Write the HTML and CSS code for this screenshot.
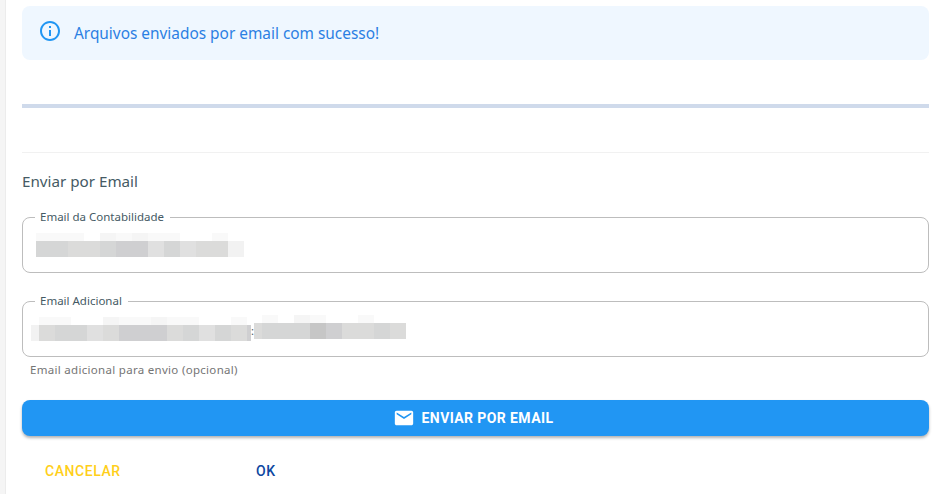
FILE: index.html
```html
<!DOCTYPE html>
<html lang="pt-BR">
<head>
  <meta charset="UTF-8">
  <meta name="viewport" content="width=device-width, initial-scale=1.0">
  <title>Enviar por Email</title>
  <link rel="stylesheet" href="styles.css">
</head>
<body>
  <main class="panel">
    <div class="alert">
      <svg class="alert-icon" viewBox="0 0 24 24"><path d="M11 7h2v2h-2zm0 4h2v6h-2zm1-9C6.48 2 2 6.48 2 12s4.48 10 10 10 10-4.48 10-10S17.52 2 12 2zm0 18c-4.41 0-8-3.59-8-8s3.59-8 8-8 8 3.59 8 8-3.59 8-8 8z"/></svg>
      <span>Arquivos enviados por email com sucesso!</span>
    </div>

    <div class="progress"></div>
    <hr class="divider">

    <h2 class="title">Enviar por Email</h2>

    <fieldset class="field first">
      <legend>Email da Contabilidade</legend>
      <div class="blur">
        <div class="blur-row">
          <i class="w16 s1"></i><i class="w16 s1"></i><i class="w16 s1"></i><i class="w16"></i><i class="w16 s2"></i><i class="w16 s1"></i><i class="w16 s2"></i><i class="w16 s1"></i><i class="w16 s1"></i><i class="w16"></i><i class="w16"></i><i class="w16 s1"></i>
        </div>
        <div class="blur-row">
          <i class="w16 s6"></i><i class="w16 s6"></i><i class="w16 s5"></i><i class="w16 s5"></i><i class="w16 s6"></i><i class="w16 s7"></i><i class="w16 s7"></i><i class="w16 s4"></i><i class="w16 s6"></i><i class="w16 s4"></i><i class="w16 s5"></i><i class="w16 s5"></i><i class="w16 s3"></i>
        </div>
      </div>
    </fieldset>

    <fieldset class="field second">
      <legend>Email Adicional</legend>
      <div class="blur-pair">
        <div class="blur">
          <div class="blur-row">
            <i class="w8"></i><i class="w16 s1"></i><i class="w16 s1"></i><i class="w16"></i><i class="w16"></i><i class="w16 s2"></i><i class="w16 s1"></i><i class="w16 s1"></i><i class="w16 s2"></i><i class="w16 s1"></i><i class="w16 s1"></i><i class="w16"></i><i class="w16"></i><i class="w16 s1"></i>
          </div>
          <div class="blur-row">
            <i class="w8 s3"></i><i class="w16 s5"></i><i class="w16 s6"></i><i class="w16 s6"></i><i class="w16 s4"></i><i class="w16 s5"></i><i class="w16 s7"></i><i class="w16 s7"></i><i class="w16 s7"></i><i class="w16 s5"></i><i class="w16 s6"></i><i class="w16 s4"></i><i class="w16 s6"></i><i class="w16 s5"></i><i class="w4 s7"></i>
          </div>
        </div>
        <span class="colon">:</span>
        <div class="blur raised">
          <div class="blur-row">
            <i class="w8"></i><i class="w16 s1"></i><i class="w16"></i><i class="w16 s2"></i><i class="w16 s1"></i><i class="w16"></i><i class="w16"></i><i class="w16 s1"></i>
          </div>
          <div class="blur-row">
            <i class="w8 s5"></i><i class="w16 s6"></i><i class="w16 s6"></i><i class="w16 s6"></i><i class="w16 s8"></i><i class="w16 s7"></i><i class="w16 s5"></i><i class="w16 s5"></i><i class="w16 s6"></i><i class="w16 s5"></i>
          </div>
        </div>
      </div>
    </fieldset>
    <p class="helper">Email adicional para envio (opcional)</p>

    <button class="send" type="button">
      <svg class="send-icon" viewBox="0 0 24 24"><path d="M20 4H4c-1.1 0-1.99.9-1.99 2L2 18c0 1.1.9 2 2 2h16c1.1 0 2-.9 2-2V6c0-1.1-.9-2-2-2zm0 4l-8 5-8-5V6l8 5 8-5v2z"/></svg>
      ENVIAR POR EMAIL
    </button>

    <div class="actions">
      <button class="action cancel" type="button">CANCELAR</button>
      <button class="action ok" type="button">OK</button>
    </div>
  </main>
</body>
</html>
```

FILE: styles.css
```css
* {
  box-sizing: border-box;
}

html,
body {
  height: 100%;
}

body {
  margin: 0;
  overflow: hidden;
  background-color: #fff;
  font-family: "Noto Sans", Arial, sans-serif;
  color: #455a64;
}

.panel {
  height: 494px;
  margin-left: 5px;
  padding: 6px 3px 0 16px;
  border-left: 1px solid #ececec;
  box-shadow: -5px 0 0 #f5f5f5;
}

.alert {
  display: flex;
  align-items: center;
  gap: 12px;
  height: 54px;
  padding: 0 16px;
  border-radius: 8px;
  background-color: #eff7ff;
  color: #2b7fe3;
  font-size: 15.4px;
}

.alert-icon {
  width: 24px;
  height: 24px;
  margin-top: -5px;
  fill: #2196f3;
}

.progress {
  height: 4px;
  margin-top: 44px;
  background-color: #cfdaeb;
}

.divider {
  height: 1px;
  margin: 44px 0 0;
  border: 0;
  background-color: #f1f1f1;
}

.title {
  margin: 18px 0 0;
  font-size: 15.2px;
  font-weight: 400;
  line-height: 20px;
}

.field {
  display: block;
  min-width: 0;
  height: 64px;
  margin: 0;
  padding: 0 13px;
  border: 1px solid #bdbdbd;
  border-radius: 8px;
}

.field.first {
  margin-top: 18px;
}

.field.second {
  margin-top: 20px;
}

.field legend {
  margin-left: -1px;
  padding: 0 6px 0 5px;
  font-size: 11.5px;
  line-height: 16px;
}

.blur-pair {
  display: flex;
  align-items: flex-start;
}

.field.first .blur {
  margin-top: 8px;
}

.field.second .blur-pair {
  margin: 8px 0 0 -5px;
}

.blur-row {
  display: flex;
  height: 8px;
}

.blur-row + .blur-row {
  height: 16px;
}

.blur-row i {
  display: block;
  flex: none;
}

.raised {
  margin-top: -2px;
}

.colon {
  width: 3px;
  margin-top: 4px;
  font-size: 11px;
  line-height: 20px;
}

.w16 { width: 16px; }
.w8 { width: 8px; }
.w4 { width: 4px; }

.s1 { background-color: #f9f9f9; }
.s2 { background-color: #f5f5f5; }
.s3 { background-color: #f2f2f2; }
.s4 { background-color: #e0e0e0; }
.s5 { background-color: #dbdbda; }
.s6 { background-color: #d5d6d6; }
.s7 { background-color: #cfcfd1; }
.s8 { background-color: #c6c6c6; }

.helper {
  margin: 5px 0 0 8px;
  font-size: 11.5px;
  letter-spacing: 0.3px;
  line-height: 16px;
  color: #757575;
}

.send {
  display: flex;
  align-items: center;
  justify-content: center;
  gap: 7px;
  width: 100%;
  height: 36px;
  margin-top: 22px;
  padding: 0 5px 0 0;
  border: none;
  border-radius: 8px;
  background-color: #2196f3;
  box-shadow: 0 2px 3px rgba(0, 0, 0, 0.3);
  color: #fff;
  font-family: Roboto, Arial, sans-serif;
  font-size: 14px;
  font-weight: 700;
  letter-spacing: 0.4px;
}

.send-icon {
  width: 22px;
  height: 22px;
  fill: #fff;
}

.actions {
  display: flex;
  margin-top: 24px;
  padding-left: 23px;
}

.action {
  padding: 0;
  border: none;
  background: none;
  font-family: Roboto, Arial, sans-serif;
  font-size: 14px;
  font-weight: 500;
  letter-spacing: 0.55px;
  line-height: 22px;
}

.cancel {
  width: 211px;
  text-align: left;
  color: #ffcf1a;
}

.ok {
  color: #0d47a1;
}
```
